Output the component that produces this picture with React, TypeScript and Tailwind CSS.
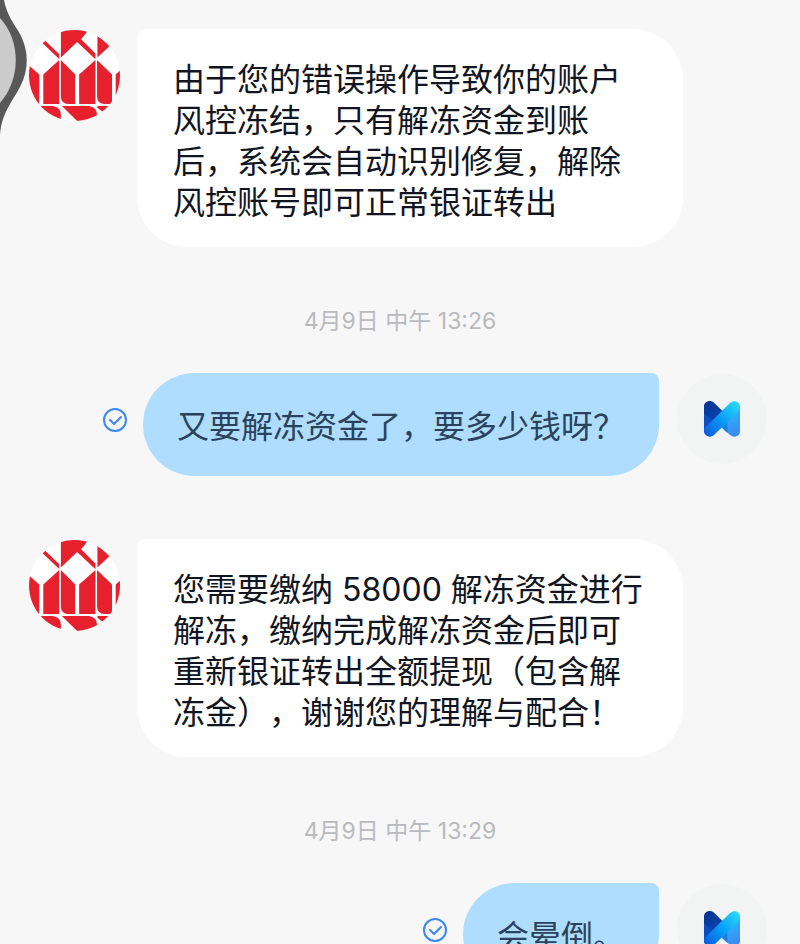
import type { ReactNode } from "react";

function BrokerAvatar() {
  return (
    <svg viewBox="87 90 274 274" className="mt-px size-[91px] shrink-0" role="img" aria-label="客服">
      <defs>
        <clipPath id="broker-clip">
          <circle cx="224" cy="227" r="137" />
        </clipPath>
      </defs>
      <circle cx="224" cy="227" r="137" fill="#fff" />
      <g clipPath="url(#broker-clip)" fill="#e6212d">
        <path d="M80 191 118 224V313H80Z" />
        <path d="M130 224 178 180V313H130Z" />
        <path d="M183 180 226 224V313H206Q183 311 183 290Z" />
        <path d="M238 224 287 180V313H238Z" />
        <path d="M292 180 337 224V313H315Q292 311 292 290Z" />
        <path d="M348 224 370 204V313H348Z" />
        <path d="M128 130 136 122 178 163V177Z" />
        <path d="M183 85H270L244 118 287 161V178L232 126 183 173Z" />
        <path d="M293 106 330 138 293 173Z" />
        <path d="M110 319H158Q183 322 183 345V370H170Z" />
        <path d="M186 319H268Q292 324 292 345L280 370H238Z" />
        <path d="M293 319H328L308 336 293 324Z" />
      </g>
    </svg>
  );
}

function UserAvatar() {
  return (
    <div className="mt-px flex size-[90px] shrink-0 items-center justify-center rounded-full bg-[#f2f4f4]">
      <svg viewBox="0 0 108 108" className="size-9" role="img" aria-label="我">
        <defs>
          <linearGradient id="m-navy" x1="0" y1="0" x2="0.6" y2="1">
            <stop offset="0" stopColor="#06318f" />
            <stop offset="1" stopColor="#0a4fc0" />
          </linearGradient>
          <linearGradient id="m-sky" x1="0" y1="0" x2="0.3" y2="1">
            <stop offset="0" stopColor="#25c8fb" />
            <stop offset="1" stopColor="#3b8cf5" />
          </linearGradient>
          <linearGradient id="m-band" x1="0" y1="1" x2="1" y2="0">
            <stop offset="0" stopColor="#0c55dc" />
            <stop offset="0.5" stopColor="#089ef5" />
            <stop offset="1" stopColor="#30e2fb" />
          </linearGradient>
        </defs>
        <path d="M0 90V16C0 2 18-5 30 5L78 52 54 78Z" fill="url(#m-navy)" />
        <path d="M0 36 32 68 0 96Z" fill="#0b4ec2" />
        <path d="M54 80 106 14 108 18V90C108 106 90 112 79 103Z" fill="url(#m-sky)" />
        <path d="M54 80 70 64V96Z" fill="#1680e4" />
        <path d="M5 78 78 6C90-5 108 1 108 18 108 26 105 30 100 35L30 102C18 113 0 105 0 90 0 85 2 81 5 78Z" fill="url(#m-band)" />
      </svg>
    </div>
  );
}

function ReadMark() {
  return (
    <svg viewBox="0 0 24 24" className="mt-[35px] size-6 shrink-0" fill="none" stroke="#3c86fb" strokeWidth="2" strokeLinecap="round" strokeLinejoin="round" role="img" aria-label="已读">
      <circle cx="12" cy="12" r="11" />
      <path d="m7 12 4 4 7-7" />
    </svg>
  );
}

function Incoming({ children }: { children: ReactNode }) {
  return (
    <article className="flex gap-[17px] pl-[29px]">
      <BrokerAvatar />
      <p className="w-[546px] rounded-[50px] rounded-tl-lg bg-white px-9 pt-[30px] pb-6 text-[32px] leading-[41px] text-[#111522]">
        {children}
      </p>
    </article>
  );
}

function Outgoing({ children }: { children: ReactNode }) {
  return (
    <article className="flex justify-end pr-[33px]">
      <ReadMark />
      <p className="mr-[18px] ml-4 rounded-[52px] rounded-tr-lg bg-[#afddff] px-[34px] pt-[33px] pb-[29px] text-[32px] leading-[41px] text-[#2a435b]">
        {children}
      </p>
      <UserAvatar />
    </article>
  );
}

function TimeLabel({ children }: { children: ReactNode }) {
  return <time className="block pt-[58px] pb-9 text-center text-[23px] leading-8 text-[#b9babd]">{children}</time>;
}

export default function App() {
  return (
    <main className="relative h-screen overflow-hidden bg-[#f7f7f7] pt-[29px] font-['Inter','Noto_Sans_CJK_SC',sans-serif] [text-spacing-trim:space-all]">
      {/* Floating handle on the screen edge */}
      <svg viewBox="0 0 28 140" className="absolute top-0 left-0 h-[140px] w-7" aria-hidden="true">
        <path d="M0 0H4C7 16 15 25 20 34 29 51 29 69 20 87 13 101 0 114 0 139Z" fill="#585858" />
        <path d="M0 18C21 41 21 79 0 103Z" fill="#cbcbcb" />
      </svg>

      <Incoming>
        由于您的错误操作导致你的账户风控冻结，只有解冻资金到账后，系统会自动识别修复，解除风控账号即可正常银证转出
      </Incoming>
      <TimeLabel>4月9日 中午 13:26</TimeLabel>
      <Outgoing>又要解冻资金了，要多少钱呀？</Outgoing>
      <div className="pt-[63px]">
        <Incoming>
          您需要缴纳 58000 解冻资金进行解冻，缴纳完成解冻资金后即可重新银证转出全额提现（包含解冻金），谢谢您的理解与配合！
        </Incoming>
      </div>
      <TimeLabel>4月9日 中午 13:29</TimeLabel>
      <Outgoing>会晕倒。</Outgoing>
    </main>
  );
}
